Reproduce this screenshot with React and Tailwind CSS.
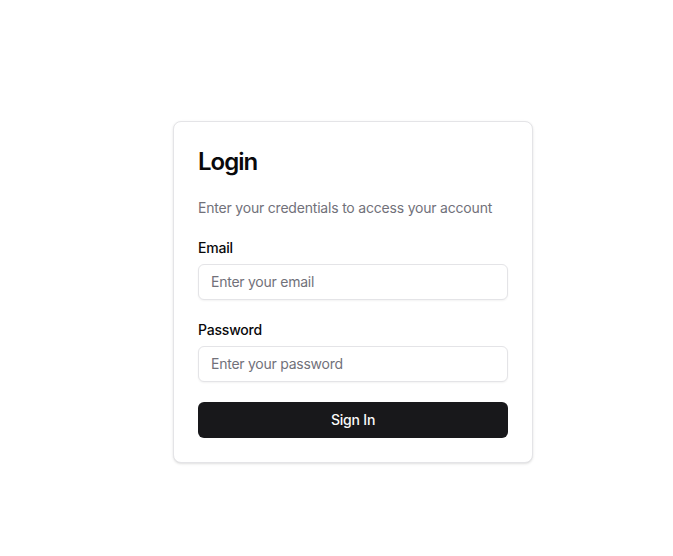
export default function App() {
  return (
    <div
      className="min-h-screen bg-white flex items-center justify-center pl-[33px] pt-[27px] tracking-[-0.2px]"
      style={{ fontFamily: 'Inter, "Noto Sans", sans-serif' }}
    >
      <div className="w-[360px] rounded-lg border border-[#e4e4e7] bg-white p-6 shadow-sm">
        <h1 className="text-2xl leading-8 font-semibold text-[#09090b] tracking-[-1px]">Login</h1>
        <p className="mt-5 text-sm leading-5 text-[#71717a]">
          Enter your credentials to access your account
        </p>
        <form className="mt-5" onSubmit={(e) => e.preventDefault()}>
          <label className="block text-sm leading-5 font-medium text-[#09090b]">Email</label>
          <input
            type="email"
            placeholder="Enter your email"
            className="mt-1.5 block w-full h-9 rounded-md border border-[#e4e4e7] bg-white px-3 text-sm tracking-[-0.25px] text-[#09090b] placeholder:text-[#71717a] shadow-xs outline-none"
          />
          <label className="mt-5 block text-sm leading-5 font-medium text-[#09090b]">Password</label>
          <input
            type="password"
            placeholder="Enter your password"
            className="mt-1.5 block w-full h-9 rounded-md border border-[#e4e4e7] bg-white px-3 text-sm tracking-[-0.25px] text-[#09090b] placeholder:text-[#71717a] shadow-xs outline-none"
          />
          <button
            type="submit"
            className="mt-5 block w-full h-9 rounded-md bg-[#18181b] text-sm font-medium text-[#fafafa]"
          >
            Sign In
          </button>
        </form>
      </div>
    </div>
  );
}
